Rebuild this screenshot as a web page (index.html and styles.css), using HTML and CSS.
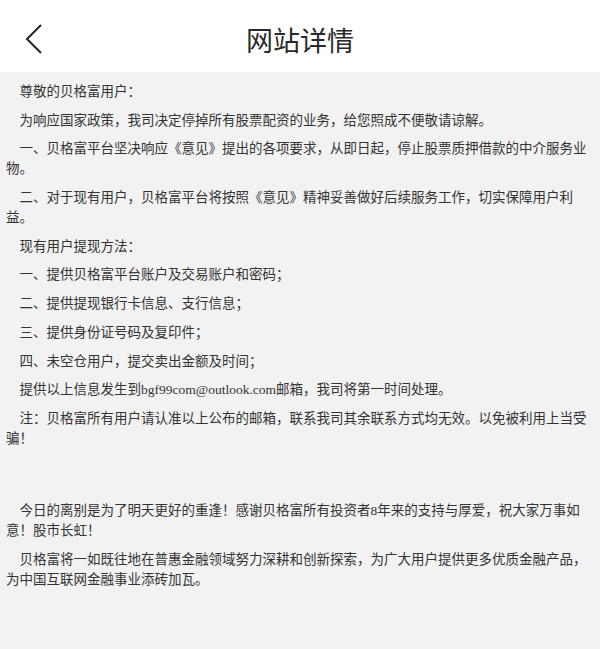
FILE: index.html
```html
<!DOCTYPE html>
<html lang="zh-CN">
<head>
<meta charset="utf-8">
<title>网站详情</title>
<link rel="stylesheet" href="styles.css">
</head>
<body>
<header class="top-bar">
  <div class="back">
    <svg class="back-icon" width="20" height="32" viewBox="0 0 20 32" aria-hidden="true">
      <polyline points="16,2 2,16 16,30" fill="none" stroke="#222" stroke-width="2"/>
    </svg>
  </div>
  <h1 class="title">网站详情</h1>
  <div class="spacer"></div>
</header>
<main class="content">
  <p class="ind">尊敬的贝格富用户：</p>
  <p class="ind">为响应国家政策，我司决定停掉所有股票配资的业务，给您照成不便敬请谅解。</p>
  <p class="ind">一、贝格富平台坚决响应《意见》提出的各项要求，从即日起，停止股票质押借款的中介服务业物。</p>
  <p class="ind">二、对于现有用户，贝格富平台将按照《意见》精神妥善做好后续服务工作，切实保障用户利益。</p>
  <p class="ind">现有用户提现方法：</p>
  <p class="ind">一、提供贝格富平台账户及交易账户和密码；</p>
  <p class="ind">二、提供提现银行卡信息、支行信息；</p>
  <p class="ind">三、提供身份证号码及复印件；</p>
  <p class="ind">四、未空仓用户，提交卖出金额及时间；</p>
  <p class="ind">提供以上信息发生到bgf99com@outlook.com邮箱，我司将第一时间处理。</p>
  <p class="ind">注：贝格富所有用户请认准以上公布的邮箱，联系我司其余联系方式均无效。以免被利用上当受骗！</p>
  <p class="ind gap">今日的离别是为了明天更好的重逢！感谢贝格富所有投资者8年来的支持与厚爱，祝大家万事如意！股市长虹！</p>
  <p class="ind">贝格富将一如既往地在普惠金融领域努力深耕和创新探索，为广大用户提供更多优质金融产品，为中国互联网金融事业添砖加瓦。</p>
</main>
</body>
</html>
```

FILE: styles.css
```css
html, body {
  margin: 0;
  padding: 0;
}
body {
  background: #f2f2f2;
  width: 600px;
  min-height: 649px;
  font-family: "Liberation Serif", "Noto Sans CJK SC", sans-serif;
  color: #333;
}
.top-bar {
  display: grid;
  grid-template-columns: 1fr auto 1fr;
  align-items: center;
  height: 72px;
  background: #ffffff;
}
.back {
  display: flex;
  align-items: center;
  padding-left: 25px;
  padding-top: 6px;
}
.back-icon {
  display: block;
}
.title {
  margin: 0;
  padding-top: 7px;
  font-family: "Noto Sans CJK SC", sans-serif;
  font-weight: 400;
  font-size: 27px;
  line-height: 36px;
  color: #2a2a2a;
}
.content {
  padding: 10px 8px 20px 6px;
  font-size: 13.5px;
  line-height: 20px;
}
.content p {
  margin: 0 0 8.7px 0;
}
.ind {
  text-indent: 13.5px;
}
.content p.gap {
  margin-top: 52px;
}
```
